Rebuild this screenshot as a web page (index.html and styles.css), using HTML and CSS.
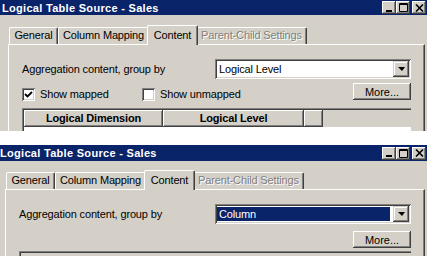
FILE: index.html
```html
<!DOCTYPE html>
<html lang="en">
<head>
    <meta charset="UTF-8">
    <meta name="viewport" content="width=device-width, initial-scale=1.0">
    <title>Logical Table Source - Sales</title>
    <link rel="stylesheet" href="styles.css">
</head>
<body>

    <!-- First capture: grouped by logical level -->
    <div class="shot shot-level">
        <div class="titlebar">
            <span class="title">Logical Table Source - Sales</span>
            <div class="caption-btns">
                <span class="cap-btn">
                    <svg width="8" height="8" viewBox="0 0 8 8"><rect x="1" y="6" width="6" height="2" fill="#000"/></svg>
                </span>
                <span class="cap-btn">
                    <svg width="9" height="9" viewBox="0 0 9 9"><path d="M0.5 0.5h8v8h-8z M0.5 1.5h8" fill="none" stroke="#000"/></svg>
                </span>
                <span class="cap-btn cap-close">
                    <svg width="9" height="8" viewBox="0 0 9 8"><path d="M1 0.5l7 7M8 0.5l-7 7" stroke="#000" stroke-width="1.6"/></svg>
                </span>
            </div>
        </div>
        <div class="window-body">
            <div class="tabs">
                <div class="tab tab-general">General</div>
                <div class="tab tab-mapping">Column Mapping</div>
                <div class="tab tab-content active">Content</div>
                <div class="tab tab-parent disabled">Parent-Child Settings</div>
            </div>
            <div class="panel">
                <div class="row">
                    <span class="label">Aggregation content, group by</span>
                    <div class="combo">
                        <span class="combo-value">Logical Level</span>
                        <span class="combo-btn"><span class="arrow"></span></span>
                    </div>
                </div>
                <div class="row row-checks">
                    <label class="check check-first">
                        <span class="box">
                            <svg width="9" height="9" viewBox="0 0 9 9"><path d="M1 4l2.5 2.5L8 2" fill="none" stroke="#000" stroke-width="1.8"/></svg>
                        </span>Show mapped
                    </label>
                    <label class="check"><span class="box"></span>Show unmapped</label>
                    <button class="btn">More...</button>
                </div>
                <div class="grid">
                    <div class="grid-head">
                        <span class="col col-dim">Logical Dimension</span>
                        <span class="col col-level">Logical Level</span>
                        <span class="col col-extra"></span>
                    </div>
                    <div class="grid-body"></div>
                </div>
            </div>
        </div>
    </div>

    <!-- Second capture: grouped by column -->
    <div class="shot shot-column">
        <div class="titlebar">
            <span class="title">Logical Table Source - Sales</span>
            <div class="caption-btns">
                <span class="cap-btn">
                    <svg width="8" height="8" viewBox="0 0 8 8"><rect x="1" y="6" width="6" height="2" fill="#000"/></svg>
                </span>
                <span class="cap-btn">
                    <svg width="9" height="9" viewBox="0 0 9 9"><path d="M0.5 0.5h8v8h-8z M0.5 1.5h8" fill="none" stroke="#000"/></svg>
                </span>
                <span class="cap-btn cap-close">
                    <svg width="9" height="8" viewBox="0 0 9 8"><path d="M1 0.5l7 7M8 0.5l-7 7" stroke="#000" stroke-width="1.6"/></svg>
                </span>
            </div>
        </div>
        <div class="window-body">
            <div class="tabs">
                <div class="tab tab-general">General</div>
                <div class="tab tab-mapping">Column Mapping</div>
                <div class="tab tab-content active">Content</div>
                <div class="tab tab-parent disabled">Parent-Child Settings</div>
            </div>
            <div class="panel">
                <div class="row">
                    <span class="label">Aggregation content, group by</span>
                    <div class="combo">
                        <span class="combo-value selected">Column</span>
                        <span class="combo-btn"><span class="arrow"></span></span>
                    </div>
                </div>
                <div class="row row-more">
                    <button class="btn">More...</button>
                </div>
                <div class="grid"></div>
            </div>
        </div>
    </div>

</body>
</html>
```

FILE: styles.css
```css
body {
    margin: 0;
    background: #fff;
    font-family: "Liberation Sans", Arial, sans-serif;
    font-size: 11px;
    letter-spacing: -0.15px;
    color: #000;
}

.shot {
    width: 427px;
    background: #d4d0c8;
    overflow: hidden;
}

.shot-level {
    height: 131px;
    margin-bottom: 14px;
}

.shot-column {
    height: 111px;
    margin-left: -2px;
    width: 429px;
}

/* Title bar */
.titlebar {
    height: 16px;
    background: #0a246a;
    display: flex;
    align-items: center;
    justify-content: space-between;
    padding: 0 1px 0 2px;
}

.shot-level .titlebar {
    height: 15px;
}

.title {
    color: #fff;
    font-weight: bold;
    font-size: 11px;
    letter-spacing: 0.3px;
}

.caption-btns {
    display: flex;
}

.cap-btn {
    width: 14px;
    height: 13px;
    background: #d4d0c8;
    box-shadow: inset -1px -1px #404040, inset 1px 1px #fff, inset -2px -2px #808080;
    display: flex;
    align-items: center;
    justify-content: center;
}

.cap-close {
    margin-left: 2px;
}

/* Tabs */
.window-body {
    padding: 10px 2px 0 8px;
}

.shot-column .window-body {
    padding-top: 9px;
    padding-left: 7px;
}

.tabs {
    display: flex;
    align-items: flex-end;
    height: 19px;
    padding-left: 1px;
    position: relative;
    z-index: 1;
}

.tab {
    box-sizing: border-box;
    height: 17px;
    line-height: 15px;
    text-align: center;
    border-top: 1px solid #fff;
    border-left: 1px solid #fff;
    border-right: 1px solid #404040;
    box-shadow: inset -1px 0 #808080;
    border-radius: 2px 2px 0 0;
    white-space: nowrap;
}

.tab-general {
    width: 49px;
}

.tab-mapping {
    width: 91px;
}

.tab-content {
    width: 47px;
}

.tab-parent {
    width: 111px;
}

.tab.active {
    position: relative;
    z-index: 2;
    width: 51px;
    height: 20px;
    margin: 0 -2px -1px -2px;
    line-height: 19px;
    background: #d4d0c8;
}

.tab.disabled {
    color: #808080;
    text-shadow: 1px 1px #fff;
}

.panel {
    height: 120px;
    border-top: 1px solid #fff;
    border-left: 1px solid #fff;
    border-right: 1px solid #404040;
    box-shadow: inset -1px 0 #808080;
    padding: 14px 13px 0 13px;
}

.row {
    display: flex;
    align-items: center;
    justify-content: space-between;
}

/* Combo box */
.combo {
    width: 196px;
    height: 20px;
    box-sizing: border-box;
    background: #fff;
    box-shadow: inset 1px 1px #808080, inset -1px -1px #fff, inset 2px 2px #404040, inset -2px -2px #d4d0c8;
    display: flex;
    align-items: center;
    padding: 2px;
}

.combo-value {
    flex: 1;
    height: 14px;
    line-height: 14px;
    padding-left: 2px;
    margin-right: 3px;
}

.combo-value.selected {
    background: #0a246a;
    color: #fff;
}

.combo-btn {
    width: 16px;
    height: 16px;
    background: #d4d0c8;
    box-shadow: inset -1px -1px #404040, inset 1px 1px #d4d0c8, inset -2px -2px #808080, inset 2px 2px #fff;
    display: flex;
    align-items: center;
    justify-content: center;
}

.arrow {
    width: 0;
    height: 0;
    border-left: 4px solid transparent;
    border-right: 3px solid transparent;
    border-top: 4px solid #000;
}

/* Checkboxes and button */
.row-checks {
    margin-top: 4px;
    height: 17px;
}

.check {
    display: flex;
    align-items: center;
    gap: 5px;
    margin-top: 5px;
    margin-right: auto;
}

.check-first {
    width: 120px;
    margin-right: 0;
}

.box {
    width: 13px;
    height: 13px;
    box-sizing: border-box;
    background: #fff;
    box-shadow: inset 1px 1px #808080, inset -1px -1px #fff, inset 2px 2px #404040, inset -2px -2px #d4d0c8;
    display: flex;
    align-items: center;
    justify-content: center;
}

.btn {
    width: 58px;
    height: 17px;
    padding: 0;
    border: 0;
    background: #d4d0c8;
    font: inherit;
    color: #000;
    box-shadow: inset -1px -1px #404040, inset 1px 1px #fff, inset -2px -2px #808080, inset 2px 2px #d4d0c8;
}

.row-more {
    justify-content: flex-end;
    margin-top: 7px;
}

/* Grid */
.grid {
    margin-top: 8px;
    height: 40px;
    box-shadow: inset 1px 1px #808080, inset 2px 2px #404040;
    padding: 2px 0 0 2px;
    box-sizing: border-box;
}

.shot-column .grid {
    margin-top: 3px;
}

.grid-head {
    display: flex;
    height: 17px;
}

.col {
    box-sizing: border-box;
    text-align: center;
    font-weight: bold;
    line-height: 16px;
    box-shadow: inset -1px -1px #404040, inset 1px 1px #fff, inset -2px -2px #808080;
}

.col-dim {
    width: 139px;
}

.col-level {
    width: 141px;
}

.col-extra {
    width: 19px;
}

.grid-body {
    background: #fff;
    height: 20px;
}
```
